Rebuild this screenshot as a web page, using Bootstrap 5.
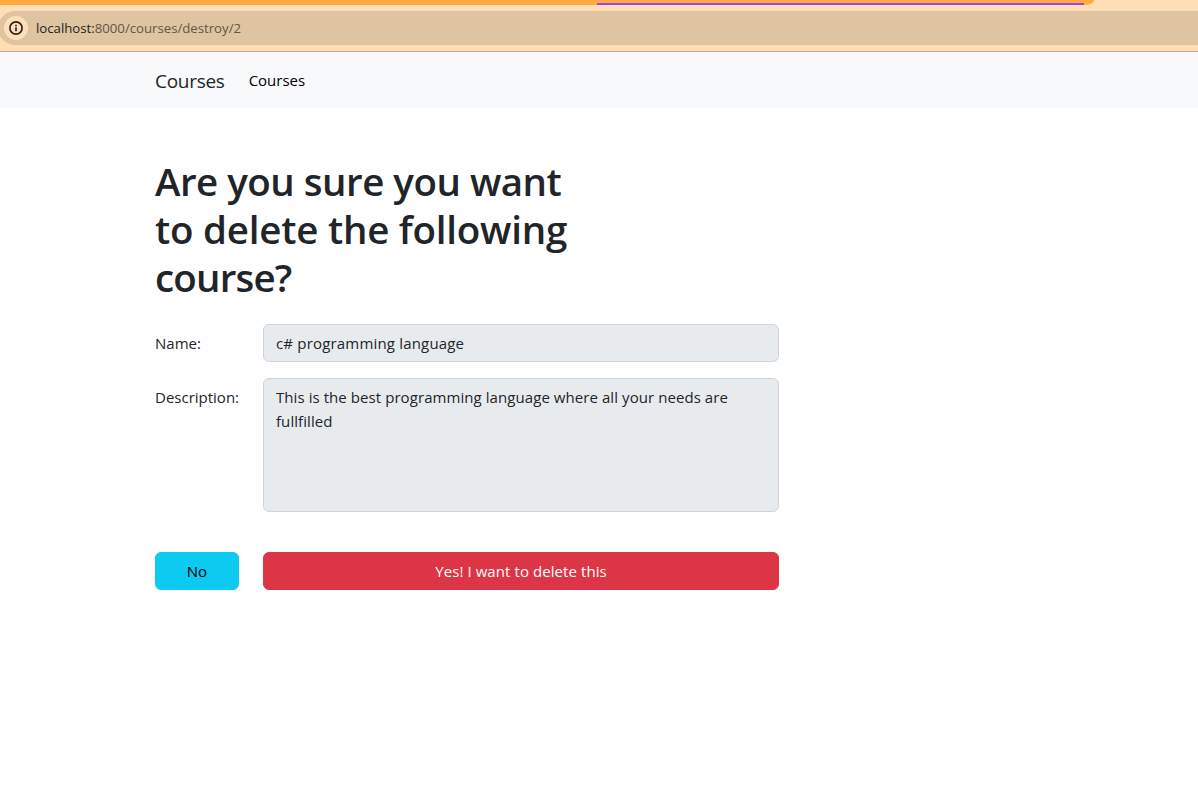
<!DOCTYPE html>
<html lang="en">
<head>
<meta charset="utf-8">
<meta name="viewport" content="width=device-width, initial-scale=1">
<title>Courses</title>
<link href="https://cdn.jsdelivr.net/npm/bootstrap@5.3.0/dist/css/bootstrap.min.css" rel="stylesheet">
<style>
  body { font-family: "Segoe UI", "Open Sans", sans-serif; overflow: hidden; background: #fff; }
  .browser { height: 52px; background: #ffdeb5; border-bottom: 1px solid #c5ae8f; }
  .tab-strip { height: 5px; width: 1094px; background: #ffab40; border-bottom-right-radius: 9px 5px; }
  .tab-line { height: 2px; width: 487px; margin-left: 597px; background: #a142f4; }
  .address { height: 34px; margin-top: 6px; margin-left: -2px; padding-left: 6px; background: #dfc4a1; border-radius: 17px 0 0 17px; }
  .info-dot { width: 24px; height: 24px; background: #ffdeb5; }
  .url { margin-left: 8px; font-size: 13.2px; line-height: 20px; color: #625645; }
  .url b { font-weight: 400; color: #1f1f1f; }
  .shell { width: 648px; margin-left: 143px; }
  .site-nav { height: 56px; background: #f8f9fa; }
  .brand-text { font-size: 19px; line-height: 30px; letter-spacing: -.28px; padding-top: 2px; }
  .link-text { font-size: 15px; line-height: 24px; color: #000; }
  h1 { font-size: 38.5px; line-height: 48px; font-weight: 600; padding-top: 1px; }
  h1.heading { margin-bottom: 23px; }
  .line-a { letter-spacing: -.5px; }
  .line-b { letter-spacing: -.23px; }
  .line-c { letter-spacing: -.8px; }
  .col-form-label, .form-control, .btn { font-size: 15px; line-height: 24px; }
  .form-control { letter-spacing: .18px; }
  .btn { letter-spacing: .08px; }
  .form-control:disabled { background: #e8ebee; border-color: #ced4da; color: #212529; opacity: 1; resize: none; }
  textarea.form-control { height: 134px; letter-spacing: .07px; }
  .btn-info { background: #0dcaf0; }
</style>
</head>
<body>
<header class="browser">
  <div class="tab-strip d-flex align-items-end overflow-hidden"><div class="tab-line"></div></div>
  <div class="address d-flex align-items-center">
    <span class="info-dot rounded-circle d-flex align-items-center justify-content-center">
      <svg width="16" height="16" viewBox="0 0 16 16" fill="none" stroke="#252525" stroke-width="1.7"><circle cx="8" cy="8" r="6.1"/><path d="M8 7.2v4M8 4.7v1.5"/></svg>
    </span>
    <span class="url"><b>localhost:</b>8000/courses/destroy/2</span>
  </div>
</header>
<nav class="site-nav d-flex align-items-center">
  <div class="shell row g-0"><div class="col-12 d-flex align-items-center gap-4 ps-2 ms-1">
    <a class="navbar-brand brand-text m-0 pb-0" href="#">Courses</a>
    <a class="nav-link link-text p-0" href="#">Courses</a>
  </div></div>
</nav>
<main class="shell pt-5">
  <h1 class="heading ms-1 ps-2"><span class="line-a">Are you sure you want</span><br><span class="line-b">to delete the following</span><br><span class="line-c">course?</span></h1>
  <form>
    <div class="row g-0 mb-3">
      <label class="col-2 ps-2 col-form-label" for="name"><span class="ms-1">Name:</span></label>
      <div class="col-10 px-2"><div class="mx-1"><input class="form-control" id="name" value="c# programming language" disabled></div></div>
    </div>
    <div class="row g-0">
      <label class="col-2 ps-2 col-form-label text-nowrap" for="desc"><span class="ms-1">Description:</span></label>
      <div class="col-10 px-2"><div class="mx-1"><textarea class="form-control" id="desc" disabled>This is the best programming language where all your needs are fullfilled</textarea></div></div>
    </div>
    <div class="row g-0 mt-4 pt-3">
      <div class="col-2 px-2"><div class="mx-1"><a class="btn btn-info w-100" href="#">No</a></div></div>
      <div class="col-10 px-2"><div class="mx-1"><button class="btn btn-danger w-100" type="button">Yes! I want to delete this</button></div></div>
    </div>
  </form>
</main>
<script src="https://cdn.jsdelivr.net/npm/bootstrap@5.3.0/dist/js/bootstrap.bundle.min.js"></script>
</body>
</html>
